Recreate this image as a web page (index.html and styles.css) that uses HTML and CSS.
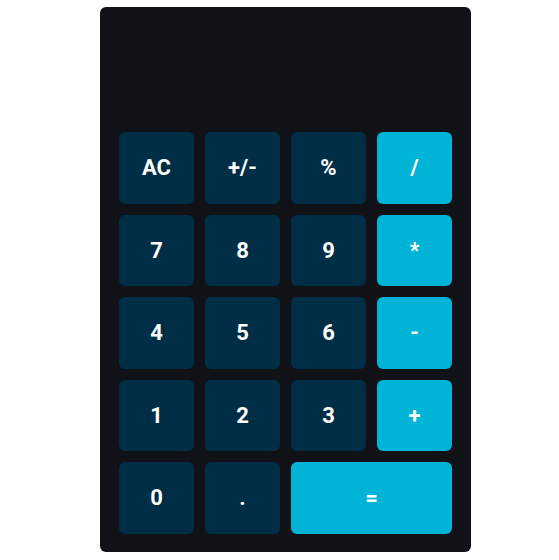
FILE: index.html
```html
<!DOCTYPE html>
<html>
<head>
<meta charset="utf-8">
<link rel="stylesheet" href="styles.css">
</head>
<body>
<div class="calc">
  <div class="display"></div>
  <div class="keys">
    <button class="key">AC</button>
    <button class="key">+/-</button>
    <button class="key">%</button>
    <button class="key op">/</button>
    <button class="key">7</button>
    <button class="key">8</button>
    <button class="key">9</button>
    <button class="key op">*</button>
    <button class="key">4</button>
    <button class="key">5</button>
    <button class="key">6</button>
    <button class="key op">-</button>
    <button class="key">1</button>
    <button class="key">2</button>
    <button class="key">3</button>
    <button class="key op">+</button>
    <button class="key">0</button>
    <button class="key">.</button>
    <button class="key op wide">=</button>
  </div>
</div>
</body>
</html>
```
FILE: styles.css
```css
html, body {
  margin: 0;
  padding: 0;
  background: #ffffff;
}
body {
  padding-top: 7px;
  font-family: Roboto, "Liberation Sans", sans-serif;
}
.calc {
  margin-left: 100px;
  width: 371px;
  height: 545px;
  box-sizing: border-box;
  background: #111217;
  border-radius: 6px;
  padding: 0 19px 19px;
  display: flex;
  flex-direction: column;
}
.display {
  height: 125px;
  flex: none;
}
.keys {
  display: grid;
  grid-template-columns: repeat(4, 75px);
  grid-auto-rows: 71.5px;
  column-gap: 11px;
  row-gap: 11px;
}
.key {
  border: none;
  margin: 0;
  padding: 0;
  border-radius: 6px;
  background: #012e47;
  color: #ffffff;
  font-family: Roboto, "Liberation Sans", sans-serif;
  font-weight: 700;
  font-size: 22px;
  display: flex;
  align-items: center;
  justify-content: center;
}
.op {
  background: #00b4d8;
}
.wide {
  grid-column: span 2;
}
```
